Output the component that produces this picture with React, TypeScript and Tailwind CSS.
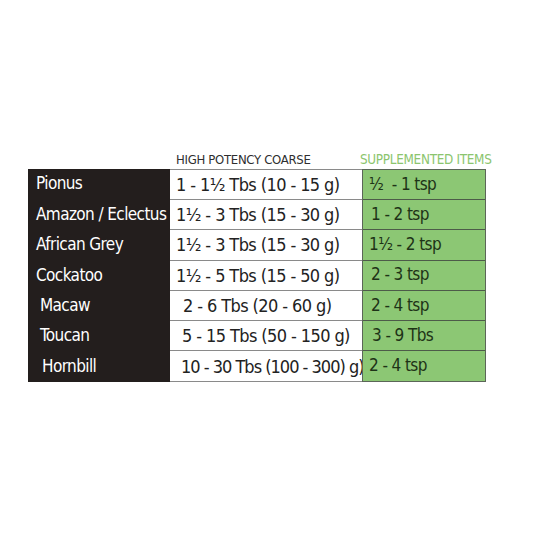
import React from "react";

const rows = [
  { name: "Pionus", hp: "1 - 1½ Tbs (10 - 15 g)", sup: "½  - 1 tsp", np: "pl-[8px]", hpPad: "pl-[6px] tracking-[-0.6px]", sPad: "pl-[6px]" },
  { name: "Amazon / Eclectus", hp: "1½ - 3 Tbs (15 - 30 g)", sup: "1 - 2 tsp", np: "pl-[8px]", hpPad: "pl-[6px] tracking-[-0.6px]", sPad: "pl-[8px]" },
  { name: "African Grey", hp: "1½ - 3 Tbs (15 - 30 g)", sup: "1½ - 2 tsp", np: "pl-[8px]", hpPad: "pl-[6px] tracking-[-0.6px]", sPad: "pl-[6px]" },
  { name: "Cockatoo", hp: "1½ - 5 Tbs (15 - 50 g)", sup: "2 - 3 tsp", np: "pl-[8px]", hpPad: "pl-[6px] tracking-[-0.6px]", sPad: "pl-[8px]" },
  { name: "Macaw", hp: "2 - 6 Tbs (20 - 60 g)", sup: "2 - 4 tsp", np: "pl-[12px]", hpPad: "pl-[13px] tracking-[-0.6px]", sPad: "pl-[8px]" },
  { name: "Toucan", hp: "5 - 15 Tbs (50 - 150 g)", sup: "3 - 9 Tbs", np: "pl-[12px]", hpPad: "pl-[12px] tracking-[-0.6px]", sPad: "pl-[9px]" },
  { name: "Hornbill", hp: "10 - 30 Tbs (100 - 300) g)", sup: "2 - 4 tsp", np: "pl-[14px]", hpPad: "pl-[11px] tracking-[-1px]", sPad: "pl-[6px]" },
];

const font = { fontFamily: '"DejaVu Sans", sans-serif' };

export default function App() {
  return (
    <div className="w-[550px] h-[550px] bg-white font-stretch-condensed" style={font}>
      <div className="pt-[150px] pl-[28px]">
        <div className="flex h-[19px] items-center">
          <div className="w-[142px]" />
          <div className="w-[190px] pl-[6px] text-[13px] text-[#2e2e2e] tracking-[-0.3px] leading-none whitespace-nowrap">
            HIGH POTENCY COARSE
          </div>
          <div className="w-[140px] text-[13.4px] text-[#8cc56e] tracking-[-0.3px] leading-none whitespace-nowrap">
            SUPPLEMENTED ITEMS
          </div>
        </div>
        <div className="flex">
          <div className="w-[142px] bg-[#231e1d] flex flex-col">
            {rows.map((r, i) => (
              <div key={i} className={`h-[30.4px] flex items-center text-white text-[17px] tracking-[-0.6px] whitespace-nowrap ${r.np}`}>
                {r.name}
              </div>
            ))}
          </div>
          <div className="w-[192px] flex flex-col border-t border-b border-[#8a8a8a] bg-white">
            {rows.map((r, i) => (
              <div
                key={i}
                className={`h-[30.2px] flex items-center text-[#222] text-[18px] whitespace-nowrap ${r.hpPad} ${i < rows.length - 1 ? "border-b border-[#8a8a8a]" : ""}`}
              >
                {r.hp}
              </div>
            ))}
          </div>
          <div className="w-[124px] flex flex-col bg-[#8cc774] border border-[#5b6658]">
            {rows.map((r, i) => (
              <div
                key={i}
                className={`h-[30.2px] flex items-center text-[#1e3317] text-[17px] tracking-[-0.6px] whitespace-pre ${r.sPad} ${i < rows.length - 1 ? "border-b border-[#4d5b49]" : ""}`}
              >
                {r.sup}
              </div>
            ))}
          </div>
        </div>
      </div>
    </div>
  );
}
